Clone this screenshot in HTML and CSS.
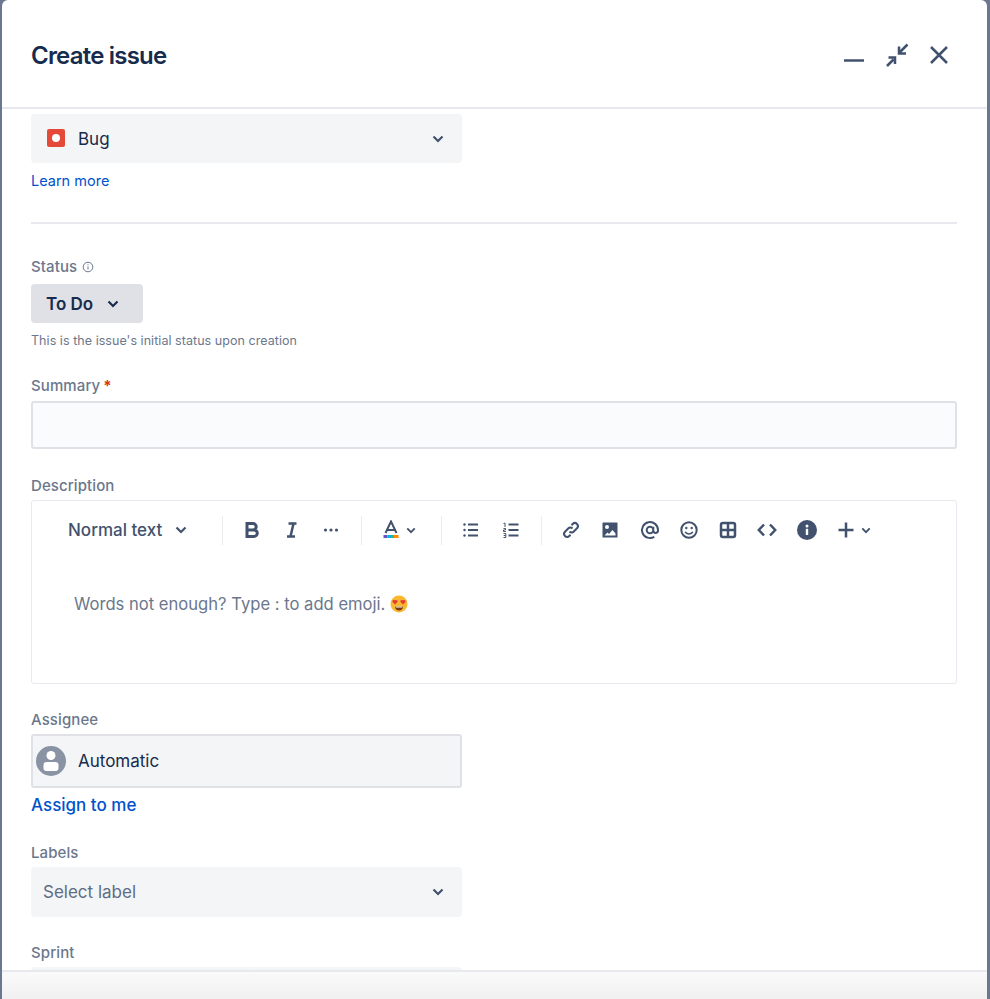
FILE: index.html
```html
<!DOCTYPE html>
<html lang="en">
<head>
<meta charset="utf-8">
<title>Create issue</title>
<link rel="stylesheet" href="styles.css">
</head>
<body>
<div class="modal">
  <header class="head">
    <h1 class="title">Create issue</h1>
    <div class="head-actions">
      <svg class="hicon" viewBox="0 0 24 24"><path d="M1 17.500h20" class="s25"/></svg>
      <svg class="hicon" viewBox="0 0 24 24"><path d="M22.500 1.500l-7.500 7.500M14 3.500V10.500h7M2 23l6.500-6.500M3.500 14.500H10V21" class="s25"/></svg>
      <svg class="hicon" viewBox="0 0 24 24"><path d="M4 4l16 16M20 4L4 20" class="s25"/></svg>
    </div>
  </header>
  <main class="content">
    <div class="select">
      <svg class="bug" viewBox="0 0 18 18"><rect width="18" height="18" rx="2" fill="#e5493a"/><circle cx="9" cy="9" r="4" fill="#fff"/></svg>
      <span class="select-text">Bug</span>
      <svg class="chev" viewBox="0 0 12 8"><path d="M1.500 1.500L6 6l4.500-4.500" /></svg>
    </div>
    <a class="learn">Learn more</a>
    <hr class="rule">

    <div class="label label-status">Status
      <svg class="info" viewBox="0 0 12 12"><circle cx="6" cy="6" r="4.800"/><path d="M6 5.500v3M6 3.300v1"/></svg>
    </div>
    <div class="status-btn">To Do
      <svg class="chev chev-dark" viewBox="0 0 12 8"><path d="M1.500 1.500L6 6l4.500-4.500"/></svg>
    </div>
    <p class="hint">This is the issue's initial status upon creation</p>

    <div class="label label-summary">Summary<span class="req">*</span></div>
    <div class="input"></div>

    <div class="label label-desc">Description</div>
    <section class="editor">
      <div class="toolbar">
        <div class="tb-group tb-style">
          <span class="style-name">Normal text</span>
          <svg class="chev" viewBox="0 0 12 8"><path d="M1.500 1.500L6 6l4.500-4.500"/></svg>
        </div>
        <div class="tb-group tb-format">
          <svg class="ticon" viewBox="0 0 20 20"><path class="s3" d="M5 3.500h6a3.200 3.200 0 0 1 0 6.400H5h7a3.300 3.300 0 0 1 0 6.600H5z"/></svg>
          <svg class="ticon" viewBox="0 0 20 20"><path class="s25" d="M6.500 3.500h8M5 16.500h8M11.500 3.500l-3 13"/></svg>
          <svg class="ticon" viewBox="0 0 20 20"><circle cx="4.500" cy="10" r="1.600" class="f"/><circle cx="10" cy="10" r="1.600" class="f"/><circle cx="15.500" cy="10" r="1.600" class="f"/></svg>
        </div>
        <div class="tb-group tb-color">
          <svg class="ticon" viewBox="0 0 20 20">
            <path class="s2" d="M4.500 13L10 1.500 15.500 13M6.500 10h7"/>
            <rect x="2.500" y="15" width="4" height="3" fill="#6554c0"/><rect x="6.500" y="15" width="3.500" height="3" fill="#00b8d9"/><rect x="10" y="15" width="3" height="3" fill="#36b37e"/><rect x="13" y="15" width="4.500" height="3" fill="#ff8b00"/>
          </svg>
          <svg class="chev chev-sm" viewBox="0 0 12 8"><path d="M1.500 1.500L6 6l4.500-4.500"/></svg>
        </div>
        <div class="tb-group tb-lists">
          <svg class="ticon" viewBox="0 0 20 20"><path class="s2" d="M7 4.500h10M7 10h10M7 15.500h10"/><circle cx="3.500" cy="4.500" r="1.200" class="f"/><circle cx="3.500" cy="10" r="1.200" class="f"/><circle cx="3.500" cy="15.500" r="1.200" class="f"/></svg>
          <svg class="ticon" viewBox="0 0 20 20"><path class="s2" d="M7.500 4.500h10M7.500 10h10M7.500 15.500h10"/><path class="s1" d="M2.500 3.500L4 3v4M2.500 8.500h2v1.500h-2v1.500h2.300M2.500 13.500h2.300v4H2.500M2.700 15.500h2"/></svg>
        </div>
        <div class="tb-group tb-insert">
          <svg class="ticon" viewBox="0 0 20 20"><path class="s2" d="M8.500 11.500a3 3 0 0 0 4.300 0l3.200-3.200a3 3 0 0 0-4.300-4.300l-1.200 1.200M11.500 8.500a3 3 0 0 0-4.300 0L4 11.700A3 3 0 0 0 8.300 16l1.200-1.200"/></svg>
          <svg class="ticon" viewBox="0 0 20 20"><path class="f" fill-rule="evenodd" d="M3 2.500h14a.5.5 0 0 1 .5.500v14a.5.5 0 0 1-.5.500H3a.5.5 0 0 1-.5-.5V3a.5.5 0 0 1 .5-.5zM7 5a2 2 0 1 0 0 4 2 2 0 0 0 0-4zM4.500 15.500h11v-2l-3-3.500-3.500 4-1.500-1.500z"/></svg>
          <svg class="ticon" viewBox="0 0 20 20"><path class="s2" d="M13.300 10a3.300 3.300 0 1 1-6.600 0 3.300 3.300 0 0 1 6.600 0zM13.300 6.700V11a2.400 2.400 0 0 0 4.700 0v-1a8 8 0 1 0-3.700 6.800"/></svg>
          <svg class="ticon" viewBox="0 0 20 20"><circle class="s2" cx="10" cy="10" r="7.700"/><circle class="f" cx="7.300" cy="8" r="1.200"/><circle class="f" cx="12.700" cy="8" r="1.200"/><path class="s15" d="M6.500 12.300c1.800 2.300 5.200 2.300 7 0"/></svg>
          <svg class="ticon" viewBox="0 0 20 20"><rect class="s25" x="3" y="3" width="14" height="14" rx="2"/><path class="s25" d="M10 3v14M3 10h14"/></svg>
          <svg class="ticon" viewBox="0 0 20 20"><path class="s25" d="M7 4.500L1.800 10 7 15.500M13 4.500l5.200 5.500-5.200 5.500"/></svg>
          <svg class="ticon" viewBox="0 0 20 20"><circle class="f" cx="10" cy="10" r="10"/><rect x="8.800" y="8.800" width="2.400" height="6.200" rx=".6" fill="#fff"/><circle cx="10" cy="6" r="1.500" fill="#fff"/></svg>
          <div class="plus">
            <svg class="ticon" viewBox="0 0 20 20"><path class="s25" d="M10 2.500v15M2.500 10h15"/></svg>
            <svg class="chev chev-sm" viewBox="0 0 12 8"><path d="M1.500 1.500L6 6l4.500-4.500"/></svg>
          </div>
        </div>
      </div>
      <p class="placeholder">Words not enough? Type : to add emoji.
        <svg class="emoji" viewBox="0 0 18 18"><circle cx="9" cy="9" r="8.500" fill="#f9b82e"/><path d="M5 11.500h8c0 2.500-1.800 4-4 4s-4-1.500-4-4z" fill="#7a3b12"/><path d="M5.500 11.500h7l-.4 1H5.900z" fill="#fff"/><path d="M5 9.500L2.600 7c-.9-1.300.9-2.800 2.400-1.500 1.500-1.300 3.300.2 2.400 1.500zM13 9.500L10.600 7c-.9-1.300.9-2.800 2.400-1.500 1.500-1.300 3.300.2 2.400 1.500z" fill="#e53935"/></svg>
      </p>
    </section>

    <div class="label label-assignee">Assignee</div>
    <div class="assignee">
      <svg class="avatar" viewBox="0 0 30 30"><circle cx="15" cy="15" r="15" fill="#8993a4"/><circle cx="15" cy="9.500" r="4.500" fill="#fff"/><path d="M7.500 19a3 3 0 0 1 3-3h9a3 3 0 0 1 3 3v3a3 3 0 0 1-3 3h-9a3 3 0 0 1-3-3z" fill="#fff"/></svg>
      <span class="assignee-name">Automatic</span>
    </div>
    <a class="assign-me">Assign to me</a>

    <div class="label label-labels">Labels</div>
    <div class="select select-labels">
      <span class="select-ph">Select label</span>
      <svg class="chev" viewBox="0 0 12 8"><path d="M1.500 1.500L6 6l4.500-4.500"/></svg>
    </div>

    <div class="label label-sprint">Sprint</div>
    <div class="select select-sprint"></div>
  </main>
  <footer class="foot"></footer>
</div>
</body>
</html>
```

FILE: styles.css
```css
* { box-sizing: border-box; }
html, body { margin: 0; height: 100%; }
body {
  background: #6b7690;
  font-family: Inter, "Liberation Sans", sans-serif;
  overflow: hidden;
}
.modal {
  height: 999px;
  margin: 0 3px 0 2px;
  background: #fff;
  border-radius: 6px 6px 0 0;
  display: flex;
  flex-direction: column;
  overflow: hidden;
}
.head {
  flex: 0 0 109px;
  border-bottom: 2px solid #e8e9ee;
  padding: 0 37px 0 29px;
  display: flex;
  align-items: center;
  justify-content: space-between;
}
.title {
  margin: 5px 0 0;
  font-size: 24px;
  line-height: 30px;
  font-weight: 600;
  letter-spacing: -0.8px;
  color: #172b4d;
}
.head-actions { display: flex; gap: 18px; margin-top: 2px; margin-right: -1px; }
.hicon { width: 24px; height: 24px; display: block; }
.content {
  flex: 1 1 auto;
  min-height: 0;
  overflow: hidden;
  padding: 5px 30px 0 29px;
}
.s1, .s15, .s2, .s25, .s3 { fill: none; stroke: #42526e; }
.s1 { stroke-width: 1; }
.s15 { stroke-width: 1.500; stroke-linecap: round; }
.s2 { stroke-width: 2; }
.s25 { stroke-width: 2.500; }
.s3 { stroke-width: 3; }
.f { fill: #42526e; }

.select {
  width: 431px;
  height: 49px;
  background: #f4f5f7;
  border-radius: 4px;
  display: flex;
  align-items: center;
  padding: 0 18px 0 16px;
  font-size: 17px;
  color: #172b4d;
}
.bug { width: 18px; height: 18px; margin-right: 13px; margin-top: -2px; }
.select-text { flex: 1; }
.chev { width: 12px; height: 8px; display: block; flex: none; }
.chev path { fill: none; stroke: #42526e; stroke-width: 2.200; }
.chev-dark { margin-left: 14px; }
.chev-dark path { stroke: #172b4d; }
.chev-sm { width: 10px; height: 7px; }
.learn {
  display: block;
  margin-top: 9px;
  font-size: 14.500px;
  line-height: 18px;
  color: #0052cc;
}
.rule { margin: 32px 0 0; border: 0; border-top: 2px solid #e8e9ee; height: 2px; }

.label {
  font-size: 15px;
  line-height: 18px;
  font-weight: 500;
  letter-spacing: 0.1px;
  color: #6b778c;
  display: flex;
  align-items: center;
}
.label-status { margin-top: 34px; gap: 5px; }
.info { width: 12px; height: 12px; }
.info circle, .info path { fill: none; stroke: #6b778c; stroke-width: 1; }
.status-btn {
  margin-top: 8px;
  width: 112px;
  height: 39px;
  background: #dfe1e6;
  border-radius: 4px;
  display: flex;
  align-items: center;
  padding-left: 15px;
  font-size: 17px;
  font-weight: 600;
  color: #172b4d;
}
.hint {
  margin: 10px 0 0;
  font-size: 12.500px;
  line-height: 16px;
  letter-spacing: 0.05px;
  color: #6b778c;
}
.label-summary { margin-top: 28px; }
.req { color: #de350b; margin-left: 3px; font-weight: 700; }
.input {
  margin-top: 6px;
  height: 48px;
  background: #fafbfc;
  border: 2px solid #dfe1e6;
  border-radius: 3px;
}
.label-desc { margin-top: 28px; }
.editor {
  margin-top: 5px;
  height: 184px;
  border: 1px solid #e8e9ee;
  border-radius: 3px;
}
.toolbar {
  display: flex;
  align-items: center;
  height: 58px;
  padding-left: 36px;
}
.tb-group {
  display: flex;
  align-items: center;
  height: 29px;
  border-right: 1px solid #ebecf0;
  color: #42526e;
}
.tb-style { width: 155px; gap: 13px; }
.style-name { font-size: 17px; font-weight: 500; color: #42526e; }
.ticon { width: 20px; height: 20px; display: block; flex: none; }
.tb-format { width: 139px; padding-left: 19px; gap: 19.500px; }
.tb-color { width: 80px; padding-left: 19px; gap: 5px; }
.tb-lists { width: 100px; padding-left: 19px; gap: 19.500px; }
.tb-insert { border-right: 0; padding-left: 19px; gap: 19.300px; }
.plus { display: flex; align-items: center; gap: 5px; }
.placeholder {
  margin: 35px 0 0 42px;
  font-size: 16.600px;
  line-height: 20px;
  color: #6b778c;
  display: flex;
  align-items: center;
  gap: 5px;
}
.emoji { width: 18px; height: 18px; display: block; }
.label-assignee { margin-top: 27px; }
.assignee {
  margin-top: 5px;
  width: 431px;
  height: 54px;
  background: #f4f5f7;
  border: 2px solid #dfe1e6;
  border-radius: 3px;
  display: flex;
  align-items: center;
  padding-left: 3px;
  gap: 12px;
}
.avatar { width: 30px; height: 30px; display: block; }
.assignee-name { font-size: 17px; color: #172b4d; }
.assign-me {
  display: block;
  margin-top: 7px;
  font-size: 17px;
  line-height: 20px;
  font-weight: 500;
  color: #0052cc;
}
.label-labels { margin-top: 29px; }
.select-labels { margin-top: 5px; height: 50px; padding-left: 12px; justify-content: space-between; }
.select-ph { color: #5e6c84; }
.label-sprint { margin-top: 27px; }
.select-sprint { margin-top: 5px; height: 49px; }
.foot {
  flex: 0 0 29px;
  position: relative;
  z-index: 1;
  border-top: 2px solid #e8e9ee;
  background: linear-gradient(#fafafb, #f0f0f1);
}
```
